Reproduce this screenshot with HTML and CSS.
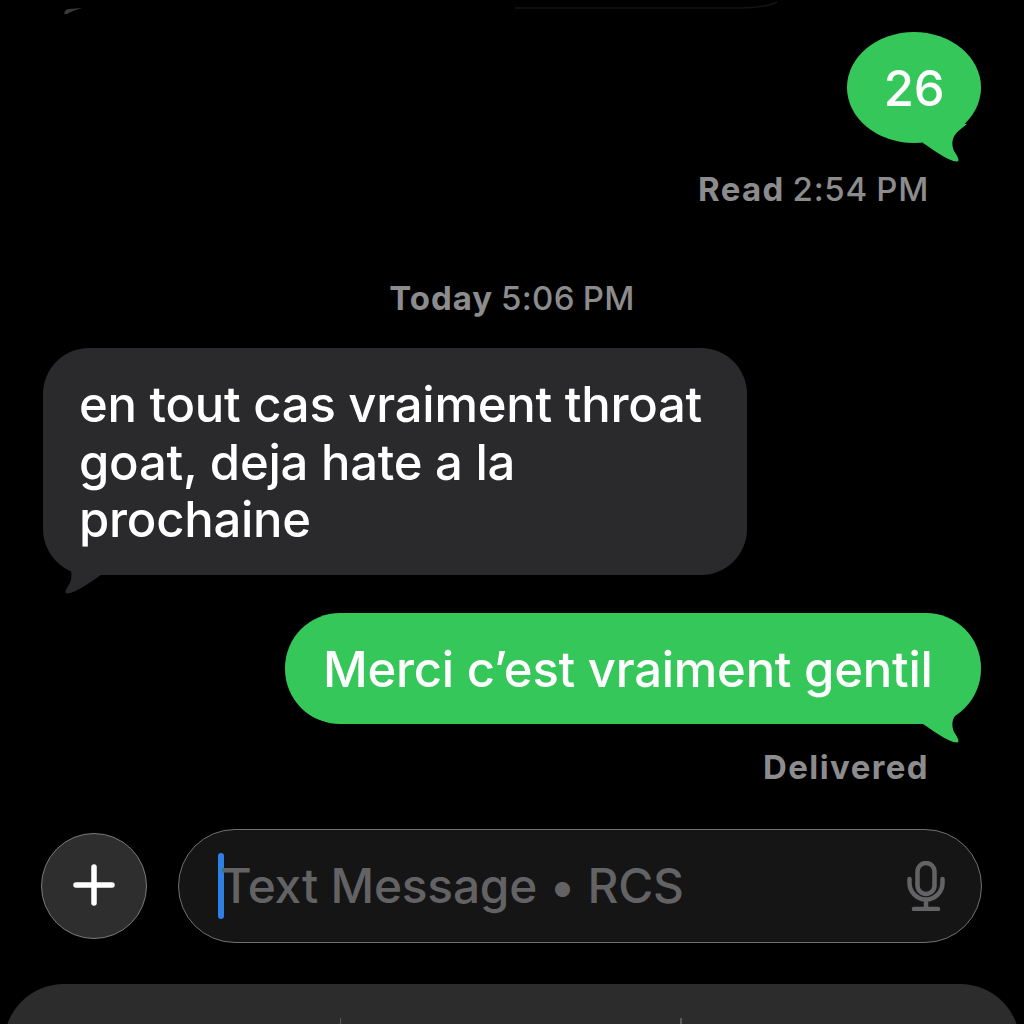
FILE: index.html
```html
<!DOCTYPE html>
<html lang="fr">
<head>
<meta charset="utf-8">
<title>Messages</title>
<link rel="stylesheet" href="styles.css">
</head>
<body>
<main class="screen">
  <svg class="remnant remnant-tail" width="30" height="16" viewBox="0 0 30 16" aria-hidden="true"><path d="M0 14 Q1 9 5 9 L18 8 Q8 11 3 14 Z"/></svg>
  <svg class="remnant remnant-edge" width="270" height="10" viewBox="0 0 270 10" aria-hidden="true"><path d="M0 8 L225 8 Q250 8 262 2" /></svg>

  <section class="thread">
    <div class="row row-out">
      <div class="bubble bubble-out bubble-round">26
        <svg class="tail tail-out" width="50" height="45" viewBox="0 0 50 45" aria-hidden="true"><path d="M0 0 L47 5 C37 13 29 18 34 32 Q41 42 37 42.5 C28 42 15 32 3 24 Z"/></svg>
      </div>
    </div>
    <p class="status status-read"><b>Read</b> <span>2:54 PM</span></p>
    <p class="stamp"><b>Today</b> <span>5:06 PM</span></p>
    <div class="row row-in">
      <div class="bubble bubble-in">en tout cas vraiment throat<br>goat, deja hate a la<br>prochaine
        <svg class="tail tail-in" width="50" height="45" viewBox="0 0 50 45" aria-hidden="true"><path d="M0 0 L47 5 C37 13 29 18 34 32 Q41 42 37 42.5 C28 42 15 32 3 24 Z"/></svg>
      </div>
    </div>
    <div class="row row-out row-merci">
      <div class="bubble bubble-out bubble-merci">Merci c’est vraiment gentil
        <svg class="tail tail-out" width="50" height="45" viewBox="0 0 50 45" aria-hidden="true"><path d="M0 0 L47 5 C37 13 29 18 34 32 Q41 42 37 42.5 C28 42 15 32 3 24 Z"/></svg>
      </div>
    </div>
    <p class="status status-delivered"><b>Delivered</b></p>
  </section>

  <section class="composer">
    <button class="plus" type="button" aria-label="Add">
      <svg width="44" height="44" viewBox="0 0 44 44" aria-hidden="true"><path d="M22 4 V40 M4 22 H40"/></svg>
    </button>
    <div class="field">
      <span class="caret"></span>
      <span class="placeholder">Text Message • RCS</span>
      <svg class="mic" width="38" height="50" viewBox="0 0 38 50" aria-hidden="true">
        <rect x="10.5" y="2" width="17" height="31" rx="8.5"/>
        <path d="M2.5 18 V22 A16.5 16.5 0 0 0 35.5 22 V18 M19 38.5 V47 M7 48 H31"/>
      </svg>
    </div>
  </section>

  <section class="keyboard">
    <span class="divider"></span>
    <span class="divider"></span>
  </section>
</main>
</body>
</html>
```
FILE: styles.css
```css
* { box-sizing: border-box; }
html, body { margin: 0; padding: 0; background: #000; }
.screen {
  position: relative;
  width: 1024px;
  height: 1024px;
  overflow: hidden;
  background: #000;
  display: flex;
  flex-direction: column;
  font-family: Inter, "Liberation Sans", sans-serif;
}
.remnant { position: absolute; top: 0; }
.remnant-tail { left: 64px; fill: #3a3a3c; }
.remnant-edge { left: 515px; fill: none; stroke: #141414; stroke-width: 1.5; }

.thread {
  display: flex;
  flex-direction: column;
  padding: 32px 43px 0;
}
.row { display: flex; }
.row-out { justify-content: flex-end; }
.row-in { justify-content: flex-start; margin-top: 30px; }
.row-merci { margin-top: 38px; }

.bubble {
  position: relative;
  font-size: 49px;
  line-height: 57.5px;
  font-weight: 500;
  color: #fff;
  letter-spacing: -0.25px;
}
.bubble-out { background: #35c759; }
.bubble-in { background: #2a2a2c; width: 704px; padding: 28px 30px 26px 36px; border-radius: 46px; }
.bubble-round {
  width: 134px;
  height: 111px;
  border-radius: 50%;
  display: flex;
  align-items: center;
  justify-content: center;
  padding-top: 2px;
}
.bubble-merci { width: 696px; height: 111px; padding: 28px 0 0 38px; border-radius: 55px; white-space: nowrap; }
.tail { position: absolute; bottom: -21px; }
.tail-out { right: 11px; fill: #35c759; }
.tail-in { left: 11px; fill: #2a2a2c; transform: scaleX(-1); }

.status, .stamp {
  margin: 0;
  font-size: 33px;
  line-height: 40px;
  color: #8c8c8e;
  font-weight: 500;
  word-spacing: -1px;
}
.status b, .stamp b { font-weight: 700; letter-spacing: 1px; }
.stamp span { letter-spacing: 0.3px; }
.status b { letter-spacing: 1.4px; }
.status span { letter-spacing: 0.7px; }
.status { text-align: right; padding-right: 52px; }
.status-read { margin-top: 26px; }
.status-delivered { margin-top: 23px; }
.stamp { text-align: center; margin-top: 69px; }

.composer {
  display: flex;
  align-items: center;
  gap: 31px;
  margin: 42px 42px 0 41px;
}
.plus {
  flex: none;
  width: 106px;
  height: 106px;
  padding: 0;
  border-radius: 50%;
  background: #2e2e2e;
  border: 1.5px solid #7a7a7a;
  display: flex;
  align-items: center;
  justify-content: center;
}
.plus svg { fill: none; stroke: #fff; stroke-width: 5.5; stroke-linecap: round; margin: 0 1px 1px 0; }
.field {
  position: relative;
  flex: 1;
  height: 114px;
  border-radius: 57px;
  background: #151515;
  border: 1.5px solid #6f6f6f;
  display: flex;
  align-items: center;
  padding: 0 36px 0 39px;
}
.caret { flex: none; width: 5.5px; height: 66px; border-radius: 3px; background: #2f80e4; margin-right: -3px; }
.placeholder { flex: 1; font-size: 47.8px; color: #636365; font-weight: 500; letter-spacing: -0.2px; }
.mic { flex: none; fill: none; stroke: #636365; stroke-width: 4.5; stroke-linecap: round; }

.keyboard {
  margin: 41px 4px 0;
  flex: 1;
  min-height: 60px;
  background: #2c2c2c;
  border-radius: 62px 62px 0 0;
  display: flex;
  justify-content: center;
  gap: 339px;
  padding: 34px 3px 0 0;
}
.divider { width: 1.5px; height: 30px; background: #5a5a5a; }
```
